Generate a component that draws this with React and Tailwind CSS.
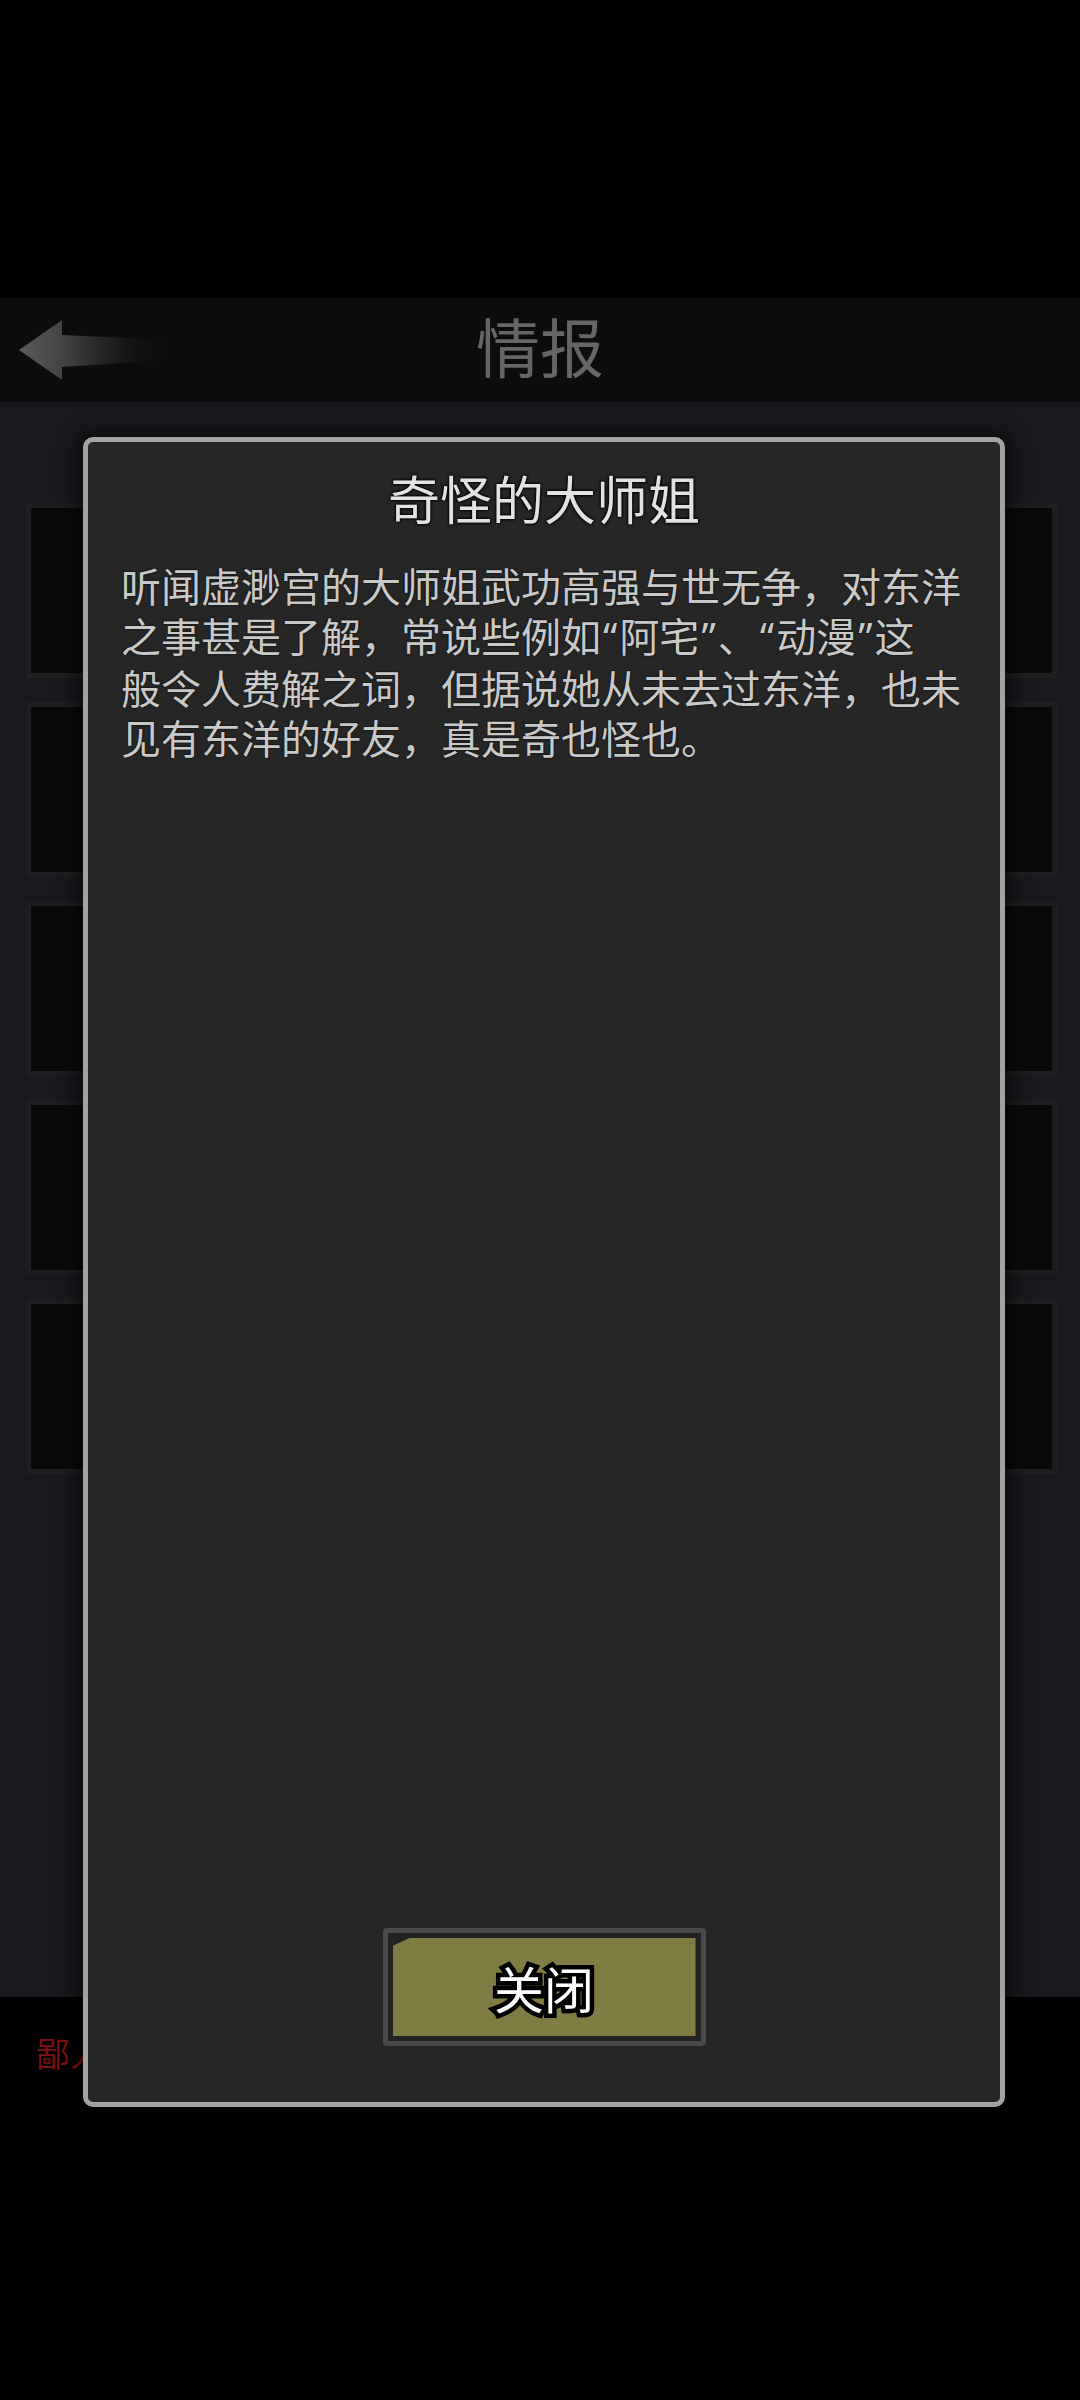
import React from "react";

const cjk = "font-['Noto_Sans_CJK_SC','Noto_Sans',sans-serif]";

// curly quotes drawn with a Latin face so they stay narrow
const Q = ({ children }) => (
  <span className="font-['Noto_Sans',sans-serif] px-[2px]">{children}</span>
);

const BackArrow = () => (
  <svg width="160" height="70" viewBox="0 0 160 70">
    <defs>
      <linearGradient id="arrowFill" x1="0" y1="0" x2="1" y2="0">
        <stop offset="0" stopColor="#5a5a5a" />
        <stop offset="0.35" stopColor="#3e3e3e" />
        <stop offset="1" stopColor="#0d0d0d" stopOpacity="0" />
      </linearGradient>
    </defs>
    <path
      d="M4 35 L47 5 L47 20 L155 25 L155 45 L47 52 L47 65 Z"
      fill="url(#arrowFill)"
    />
  </svg>
);

const App = () => {
  return (
    <div className={`relative w-[1080px] h-[2400px] bg-black flex flex-col overflow-hidden ${cjk}`}>
      {/* status area */}
      <div className="h-[298px] shrink-0" />

      {/* Top bar */}
      <header className="h-[104px] shrink-0 bg-[#0d0d0d] flex items-center relative">
        <div className="pl-[15px]">
          <BackArrow />
        </div>
        <h1 className="absolute left-0 right-0 text-center text-[64px] leading-none text-[#666666] -mt-[12px]">
          情报
        </h1>
      </header>

      {/* Entry list */}
      <main className="flex-1 bg-[#17191c] pl-[26px] pr-[23px] pt-[101px] flex flex-col gap-[24px]">
        {[0, 1, 2, 3, 4].map((i) => (
          <div
            key={i}
            className="h-[175px] border-[5px] border-[#1c1e20] bg-[#0a0a0a] rounded-[2px]"
          />
        ))}
      </main>

      {/* Bottom bar */}
      <footer className="h-[403px] shrink-0 bg-black pl-[36px] pt-[30px]">
        <span className="text-[34px] text-[#7a0f0f]">鄙人</span>
      </footer>

      {/* Info dialog */}
      <div className="absolute left-[83px] top-[437px] w-[922px] h-[1670px] rounded-[10px] border-[5px] border-[#a3a3a3] bg-[#262626] shadow-[0_0_18px_6px_rgba(0,0,0,0.55)] flex flex-col items-center pt-[25px] pb-[56px]">
        <h2 className="text-[52px] leading-[62px] text-[#e2e2e2] [text-shadow:0_0_3px_#000,0_0_3px_#000,0_0_2px_#000]">
          奇怪的大师姐
        </h2>
        <div className="self-stretch pl-[33px] mt-[31px] text-[40px] leading-[50px] text-[#c9c9c9] [text-shadow:0_0_2px_#000]">
          <p className="whitespace-nowrap">听闻虚渺宫的大师姐武功高强与世无争，对东洋</p>
          <p className="whitespace-nowrap">
            之事甚是了解，常说些例如<Q>“</Q>阿宅<Q>”</Q>、<Q>“</Q>动漫<Q>”</Q>这
          </p>
          <p className="whitespace-nowrap">般令人费解之词，但据说她从未去过东洋，也未</p>
          <p className="whitespace-nowrap">见有东洋的好友，真是奇也怪也。</p>
        </div>

        <button className="mt-auto w-[323px] h-[118px] rounded-[4px] border-[5px] border-[#4a4a4a] bg-[#222222] p-[5px]">
          <div className="w-full h-full bg-[#7f7c43] [clip-path:polygon(17px_0,100%_0,100%_100%,0_100%,0_8px)] flex items-center justify-center">
            <span className="text-[50px] leading-none text-white [paint-order:stroke_fill] [-webkit-text-stroke:9px_#000]">
              关闭
            </span>
          </div>
        </button>
      </div>
    </div>
  );
};

export default App;
